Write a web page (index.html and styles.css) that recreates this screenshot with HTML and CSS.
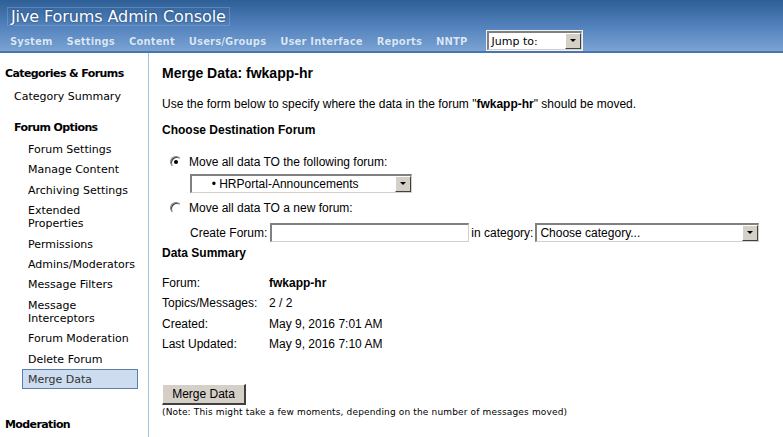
FILE: index.html
```html
<!DOCTYPE html>
<html>
<head>
  <meta charset=utf-8>
  <title>Jive Forums Admin Console: Merge Data</title>
  <link rel="stylesheet" href="styles.css">
</head>
<body>

<div class=header>
  <div class=titleRow><span class=logo>Jive Forums Admin Console</span></div>
  <div class=nav>
    <a>System</a>
    <a>Settings</a>
    <a>Content</a>
    <a>Users/Groups</a>
    <a>User Interface</a>
    <a>Reports</a>
    <a>NNTP</a>
    <div class='select jump'><span>Jump to:</span><b class=arrow></b></div>
  </div>
</div>

<div class=page>
  <div class=sidebar>
    <div class=secHead>Categories &amp; Forums</div>
    <div class=item>Category Summary</div>
    <div class=subHead>Forum Options</div>
    <div class=sub>
      <div class=item>Forum Settings</div>
      <div class=item>Manage Content</div>
      <div class=item>Archiving Settings</div>
      <div class=item>Extended<br>Properties</div>
      <div class=item>Permissions</div>
      <div class=item>Admins/Moderators</div>
      <div class=item>Message Filters</div>
      <div class=item>Message<br>Interceptors</div>
      <div class=item>Forum Moderation</div>
      <div class=item>Delete Forum</div>
      <div class='item current'>Merge Data</div>
    </div>
    <div class='secHead last'>Moderation</div>
  </div>

  <div class=main>
    <h1>Merge Data: fwkapp-hr</h1>
    <p class=intro>Use the form below to specify where the data in the forum "<b>fwkapp-hr</b>" should be moved.</p>
    <h2>Choose Destination Forum</h2>

    <div class=choice>
      <span class='radio on'></span><span>Move all data TO the following forum:</span>
    </div>
    <div class=indent>
      <div class='select forumSel'><span>&nbsp; &nbsp; &nbsp;&bull; HRPortal-Announcements</span><b class=arrow></b></div>
    </div>
    <div class=choice>
      <span class=radio></span><span>Move all data TO a new forum:</span>
    </div>
    <div class='indent newRow'>
      <span>Create Forum:</span><span class=textBox></span><span>in category:</span>
      <div class='select catSel'><span>Choose category...</span><b class=arrow></b></div>
    </div>

    <h2 class=summaryHead>Data Summary</h2>
    <table class=summary>
      <tr><td class=lbl>Forum:</td><td><b>fwkapp-hr</b></td></tr>
      <tr><td class=lbl>Topics/Messages:</td><td>2 / 2</td></tr>
      <tr><td class=lbl>Created:</td><td>May 9, 2016 7:01 AM</td></tr>
      <tr><td class=lbl>Last Updated:</td><td>May 9, 2016 7:10 AM</td></tr>
    </table>

    <div class=btnRow><span class=btn>Merge Data</span></div>
    <div class=note>(Note: This might take a few moments, depending on the number of messages moved)</div>
  </div>
</div>

</body>
</html>
```

FILE: styles.css
```css
* {
  box-sizing: border-box;
  }
html, body {
  height: 100%;
  }
body {
  margin: 0;
  background: #fff;
  color: #000;
  font: normal 12px "Liberation Sans", Arial, sans-serif;
  display: flex;
  flex-direction: column;
  }
.header {
  height: 53px;
  background: linear-gradient(#2f5f97, #5584be 55%, #7ba3d3);
  border-bottom: 2px solid #4676ad;
  }
.titleRow {
  height: 30px;
  padding: 7px 0 0 7px;
  }
.logo {
  display: inline-block;
  height: 19px;
  padding: 0 3px 0 3px;
  border: 1px solid rgba(140, 175, 220, .4);
  color: #fff;
  font: normal 16px "DejaVu Sans", Verdana, sans-serif;
  letter-spacing: -0.1px;
  line-height: 17px;
  text-shadow: 0 0 2px #123a6a;
  }
.nav {
  display: flex;
  align-items: center;
  height: 21px;
  padding-top: 1px;
  padding-left: 10px;
  }
.nav a {
  margin-right: 14px;
  color: #dbe7f6;
  font: bold 10px "DejaVu Sans", Verdana, sans-serif;
  letter-spacing: 0.15px;
  text-shadow: 0 0 1px #4f7db3;
  }
.nav a:last-of-type {
  margin-right: 19px;
  }
.select {
  display: flex;
  align-items: center;
  justify-content: space-between;
  height: 19px;
  background: #fff;
  border-top: 2px solid #808080;
  border-left: 2px solid #808080;
  border-right: 1px solid #d4d0c8;
  border-bottom: 1px solid #d4d0c8;
  padding-left: 3px;
  }
.select span {
  white-space: nowrap;
  }
.arrow {
  position: relative;
  width: 16px;
  height: 16px;
  background: #d4d0c8;
  border-top: 1px solid #fff;
  border-left: 1px solid #fff;
  border-right: 1px solid #404040;
  border-bottom: 1px solid #404040;
  }
.arrow:after {
  content: '';
  position: absolute;
  left: 4px;
  top: 5px;
  border-left: 3px solid transparent;
  border-right: 3px solid transparent;
  border-top: 3px solid #000;
  }
.jump {
  width: 95px;
  height: 19px;
  margin-top: -1px;
  outline: 1px solid #f0f0f0;
  font: normal 11px "DejaVu Sans", Verdana, sans-serif;
  }
.page {
  flex: 1;
  display: flex;
  }
.sidebar {
  width: 149px;
  flex: none;
  border-right: 1px solid #a7c0df;
  padding-top: 14px;
  font: normal 11px "DejaVu Sans", Verdana, sans-serif;
  color: #000;
  }
.secHead {
  padding-left: 5px;
  font-weight: bold;
  letter-spacing: -0.6px;
  line-height: 14px;
  }
.secHead.last {
  margin-top: 29px;
  }
.sidebar .item {
  padding: 3px 0 3px 14px;
  line-height: 13px;
  margin-top: 6px;
  }
.subHead {
  margin-top: 15px;
  padding-left: 14px;
  font-weight: bold;
  letter-spacing: -0.6px;
  line-height: 14px;
  margin-bottom: 4px;
  }
.sub .item {
  padding-left: 6px;
  margin: 0 10px 0 22px;
  padding-top: 4px;
  padding-bottom: 3.4px;
  }
.sub .item.current {
  background: #cddcee;
  border: 1px solid #5b80ab;
  padding: 3px 0 2.5px 5px;
  color: #333;
  margin-top: 0;
  }
.main {
  flex: 1;
  padding: 12px 0 0 13px;
  }
h1 {
  margin: 0;
  font: bold 14px "Liberation Sans", Arial, sans-serif;
  line-height: 17px;
  }
.intro {
  margin: 15px 0 0;
  line-height: 14px;
  }
h2 {
  margin: 12px 0 0;
  font: bold 12px "Liberation Sans", Arial, sans-serif;
  line-height: 14px;
  }
.choice {
  display: flex;
  align-items: center;
  gap: 6px;
  padding-left: 8px;
  height: 18px;
  margin-top: 16px;
  }
.choice + .indent {
  margin-top: 3px;
  }
.indent + .choice {
  margin-top: 6px;
  }
.radio {
  width: 12px;
  height: 12px;
  border-radius: 50%;
  border: 1px solid;
  border-color: #808080 #fff #fff #808080;
  box-shadow: inset 1px 1px 0 #404040;
  background: #fff;
  position: relative;
  margin-right: 1px;
  }
.radio.on:after {
  content: '';
  position: absolute;
  left: 3px;
  top: 3px;
  width: 4px;
  height: 4px;
  border-radius: 50%;
  background: #000;
  }
.indent {
  padding-left: 28px;
  }
.forumSel {
  width: 222px;
  }
.newRow {
  display: flex;
  align-items: center;
  height: 19px;
  }
.choice + .newRow {
  margin-top: 6px;
  }
.textBox {
  width: 199px;
  height: 19px;
  margin: 0 2px 0 3px;
  border-top: 2px solid #808080;
  border-left: 2px solid #808080;
  border-right: 1px solid #d4d0c8;
  border-bottom: 1px solid #d4d0c8;
  background: #fff;
  }
.catSel {
  width: 224px;
  margin-left: 2px;
  }
.summaryHead {
  margin-top: 4px;
  }
.summary {
  margin-top: 13px;
  border-collapse: collapse;
  }
.summary td {
  padding: 0;
  height: 20.3px;
  vertical-align: middle;
  }
.summary td.lbl {
  width: 107px;
  }
.btnRow {
  margin-top: 30px;
  }
.btn {
  display: inline-block;
  width: 84px;
  height: 21px;
  line-height: 18px;
  text-align: center;
  font-size: 12px;
  background: #d4d0c8;
  border-top: 1px solid #fff;
  border-left: 1px solid #fff;
  border-right: 2px solid #404040;
  border-bottom: 2px solid #404040;
  }
.note {
  margin-top: 2px;
  font: normal 9px "DejaVu Sans", Verdana, sans-serif;
  letter-spacing: 0.15px;
  }
```
